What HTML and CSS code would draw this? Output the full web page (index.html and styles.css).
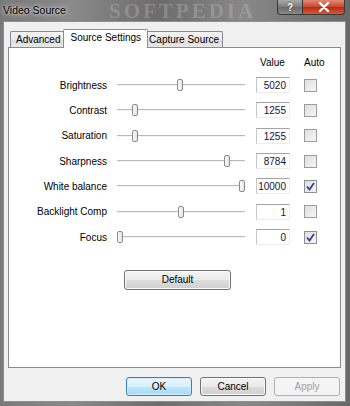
FILE: index.html
```html
<!DOCTYPE html>
<html>
<head>
    <meta charset="utf-8">
    <title>Video Source</title>
    <link rel="stylesheet" href="styles.css">
</head>
<body>
    <div class="window">
        <div class="titlebar">
            <span class="title">Video Source</span>
            <span class="watermark">SOFTPEDIA</span>
            <div class="caption-btns">
                <span class="cap help">?</span>
                <span class="cap close">
                    <svg viewBox="0 0 12 10" width="12" height="10"><path d="M2 1 L10 9 M10 1 L2 9" stroke="#fff" stroke-width="2.4" stroke-linecap="round"/></svg>
                </span>
            </div>
        </div>
        <div class="client">
            <div class="tabs">
                <div class="tab">Advanced</div>
                <div class="tab active">Source Settings</div>
                <div class="tab">Capture Source</div>
            </div>
            <div class="panel">
                <div class="grid">
                    <span></span><span></span>
                    <span class="head">Value</span>
                    <span class="head">Auto</span>

                    <label class="lbl">Brightness</label>
                    <div class="slider"><span class="thumb" style="left: 60px"></span></div>
                    <div class="val">5020</div>
                    <span class="chk"></span>

                    <label class="lbl">Contrast</label>
                    <div class="slider"><span class="thumb" style="left: 15px"></span></div>
                    <div class="val">1255</div>
                    <span class="chk"></span>

                    <label class="lbl">Saturation</label>
                    <div class="slider"><span class="thumb" style="left: 15px"></span></div>
                    <div class="val">1255</div>
                    <span class="chk"></span>

                    <label class="lbl">Sharpness</label>
                    <div class="slider"><span class="thumb" style="left: 107px"></span></div>
                    <div class="val">8784</div>
                    <span class="chk"></span>

                    <label class="lbl">White balance</label>
                    <div class="slider"><span class="thumb" style="left: 122px"></span></div>
                    <div class="val">10000</div>
                    <span class="chk checked"><svg viewBox="0 0 9 9" width="9" height="9"><path d="M1 4.5 L3.5 7.5 L8 1" fill="none" stroke="#2a3f8f" stroke-width="1.7"/></svg></span>

                    <label class="lbl">Backlight Comp</label>
                    <div class="slider"><span class="thumb" style="left: 61px"></span></div>
                    <div class="val">1</div>
                    <span class="chk"></span>

                    <label class="lbl">Focus</label>
                    <div class="slider"><span class="thumb" style="left: 0px"></span></div>
                    <div class="val">0</div>
                    <span class="chk checked"><svg viewBox="0 0 9 9" width="9" height="9"><path d="M1 4.5 L3.5 7.5 L8 1" fill="none" stroke="#2a3f8f" stroke-width="1.7"/></svg></span>
                </div>
                <div class="default-row">
                    <button class="btn default">Default</button>
                </div>
            </div>
            <div class="actions">
                <button class="btn focused">OK</button>
                <button class="btn">Cancel</button>
                <button class="btn disabled">Apply</button>
            </div>
        </div>
    </div>
</body>
</html>
```

FILE: styles.css
```css
html, body {
    margin: 0;
    height: 100%;
}
body {
    font-family: "Liberation Sans", Arial, sans-serif;
    font-size: 10px;
    color: #000;
    background: #5c5c5c;
}
.window {
    width: 350px;
    height: 406px;
    box-sizing: border-box;
    padding: 0 4px 4px 3px;
    display: flex;
    flex-direction: column;
    background: linear-gradient(90deg, #787878 0%, #8a8a8a 20%, #6c6c6c 45%, #888888 70%, #686868 100%);
}
.titlebar {
    position: relative;
    height: 21px;
    display: flex;
    align-items: flex-start;
}
.title {
    font-size: 10.5px;
    color: #000;
    margin-top: 4px;
    position: relative;
    z-index: 1;
    text-shadow: 0 0 6px #d8d8d8, 0 0 3px #e4e4e4;
}
.watermark {
    position: absolute;
    left: 106px;
    top: 1px;
    font-family: "Liberation Serif", serif;
    font-weight: bold;
    font-size: 21px;
    line-height: 21px;
    letter-spacing: 3px;
    color: rgba(210, 210, 210, 0.28);
}
.caption-btns {
    margin-left: auto;
    margin-right: 1px;
    display: flex;
}
.cap {
    height: 15px;
    display: flex;
    align-items: center;
    justify-content: center;
    box-sizing: border-box;
    border: 1px solid #3a3a3a;
    border-top: none;
}
.help {
    width: 26px;
    border-radius: 0 0 0 4px;
    background: linear-gradient(#a9a9a9, #7d7d7d 50%, #6a6a6a 51%, #8a8a8a);
    color: #fff;
    font-weight: bold;
    font-size: 10px;
    text-shadow: 0 0 2px #333;
}
.close {
    width: 42px;
    border-left: none;
    border-radius: 0 0 4px 0;
    background: linear-gradient(#e08a78, #c8452e 50%, #b62a12 51%, #d35a3a);
}
.client {
    flex: 1;
    background: #f0f0f0;
    border: 1px solid #8e8e8e;
    padding: 7px 0 0 4px;
    display: flex;
    flex-direction: column;
}
.tabs {
    display: flex;
    align-items: flex-end;
    height: 18px;
    padding-left: 2px;
}
.tab {
    height: 15px;
    line-height: 15px;
    padding: 0 5px;
    box-sizing: content-box;
    border: 1px solid #898c95;
    border-bottom: none;
    border-right: none;
    background: linear-gradient(#f3f3f3, #ebebeb 50%, #dddddd 51%, #e7e7e7);
    border-radius: 2px 2px 0 0;
}
.tab:last-child {
    border-right: 1px solid #898c95;
    padding: 0 3px;
}
.tab.active {
    height: 18px;
    line-height: 16px;
    background: #fff;
    margin: 0 -2px -1px -2px;
    padding: 0 6px;
    border-right: 1px solid #898c95;
    position: relative;
    z-index: 1;
}
.tab.active + .tab {
    border-left: none;
}
.panel {
    width: 331px;
    height: 310px;
    background: #fff;
    border: 1px solid #898c95;
    padding-top: 9px;
    box-sizing: content-box;
}
.grid {
    display: grid;
    grid-template-columns: 98px 128px 34px 13px;
    column-gap: 10px;
    grid-template-rows: 15.5px;
    grid-auto-rows: 25.33px;
    align-items: center;
}
.grid .val,
.grid > .head:nth-child(3) {
    margin-left: 1px;
}
.grid .chk,
.grid > .head:nth-child(4) {
    margin-left: 5px;
}
.head {
    align-self: start;
    text-align: center;
    white-space: nowrap;
}
.lbl {
    text-align: right;
}
.slider {
    position: relative;
    height: 2px;
    border-top: 1px solid #b9b9b9;
    border-bottom: 1px solid #f4f4f4;
    background: #e2e2e2;
    box-sizing: border-box;
}
.thumb {
    position: absolute;
    top: -6px;
    width: 6px;
    height: 12px;
    box-sizing: border-box;
    border: 1px solid #8a8a8a;
    border-radius: 2px;
    background: linear-gradient(90deg, #fafafa, #e4e4e4);
}
.val {
    height: 16px;
    line-height: 16px;
    box-sizing: border-box;
    border-top: 1px solid #a3a3a3;
    border-left: 1px solid #c6c6c6;
    border-right: 1px solid #ececec;
    border-bottom: 1px solid #ececec;
    text-align: right;
    padding-right: 3px;
    color: #14143a;
    width: 34px;
}
.chk {
    width: 13px;
    height: 13px;
    box-sizing: border-box;
    border: 1px solid #9c9c9c;
    background: linear-gradient(135deg, #dedede, #f6f6f6);
    display: flex;
    align-items: center;
    justify-content: center;
}
.chk.checked {
    border-color: #8f8f8f;
}
.default-row {
    display: flex;
    padding: 20px 0 0 115px;
}
.btn {
    font-family: "Liberation Sans", Arial, sans-serif;
    font-size: 10px;
    color: #000;
    height: 19px;
    width: 66px;
    padding: 0;
    border: 1px solid #707070;
    border-radius: 3px;
    background: linear-gradient(#f2f2f2, #ebebeb 50%, #dddddd 51%, #cfcfcf);
    box-shadow: inset 0 0 0 1px #fbfbfb;
}
.btn.default {
    width: 107px;
    height: 20px;
}
.actions {
    display: flex;
    justify-content: flex-end;
    gap: 8px;
    padding: 9px 5px 0 0;
}
.btn.focused {
    border-color: #3c7fb1;
    background: linear-gradient(#eaf6fd, #d9f0fc 50%, #bee6fd 51%, #a7d9f5);
    box-shadow: inset 0 0 0 1px #d0eefd;
}
.btn.disabled {
    color: #a0a0a0;
    border-color: #adb2b5;
    background: #f4f4f4;
    box-shadow: none;
}
```
